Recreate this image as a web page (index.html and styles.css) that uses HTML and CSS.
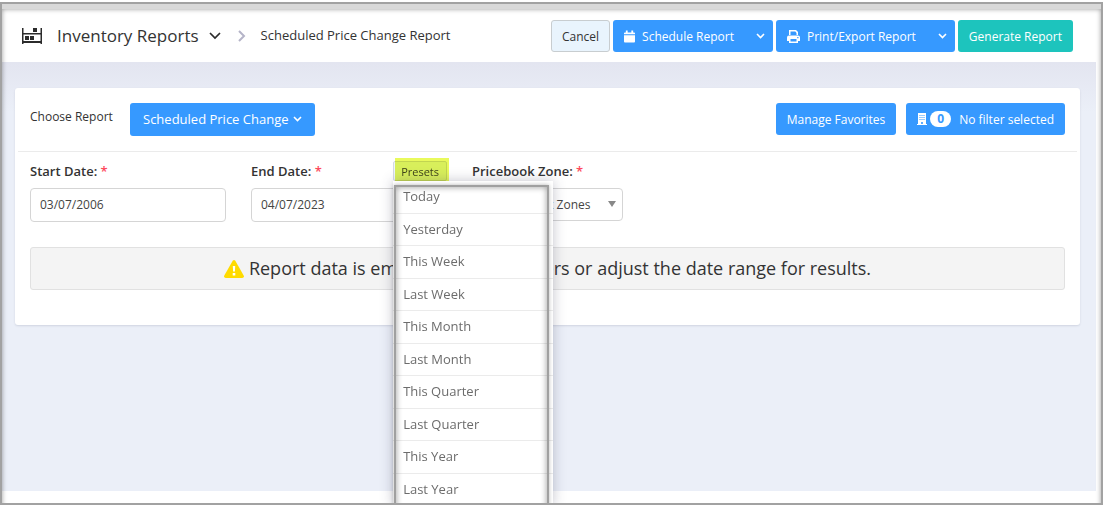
FILE: index.html
```
<!DOCTYPE html>
<html lang="en">
<head>
<meta charset="UTF-8">
<meta name="viewport" content="width=device-width, initial-scale=1.0">
<title>Inventory Reports</title>
<link rel="stylesheet" href="styles.css">
</head>
<body>
<div class="frame">

    <header class="topbar">
        <svg class="shelf" viewBox="0 0 20 16" width="20" height="16" fill="#2b2b2b">
            <path d="M0 0h1.500v5h17V0H20v16h-1.500v-1h-17v1H0zM1.500 6.500v6.500h17V6.500z" fill-rule="evenodd"/>
            <path d="M11 0h4v4h-4zM3 8h4v4H3zM8 8h4v4H8z"/>
        </svg>
        <h1 class="title">Inventory Reports</h1>
        <button class="icon-btn" type="button" aria-label="Open report menu">
            <svg viewBox="0 0 12 8" width="12" height="8" fill="none" stroke="#2b2b2b" stroke-width="1.7"><path d="M1 1l5 5 5-5"/></svg>
        </button>
        <svg class="crumb-arrow" viewBox="0 0 8 12" width="8" height="12" fill="none" stroke="#b5b4c8" stroke-width="2"><path d="M1 1l5 5-5 5"/></svg>
        <span class="crumb">Scheduled Price Change Report</span>

        <div class="actions">
            <button class="btn cancel" type="button">Cancel</button>
            <div class="split">
                <button class="btn" type="button">
                    <svg viewBox="0 0 12 13" width="11" height="13" fill="#fff"><path d="M2 0h2v2h4V0h2v2h1q1 0 1 1v1H0V3q0-1 1-1h1zM0 5h12v7q0 1-1 1H1q-1 0-1-1z"/></svg>
                    Schedule Report
                </button>
                <button class="btn caret" type="button" aria-label="Schedule options">
                    <svg viewBox="0 0 9 6" width="9" height="6" fill="none" stroke="#fff" stroke-width="1.6"><path d="M1 1l3.500 3.500L8 1"/></svg>
                </button>
            </div>
            <div class="split">
                <button class="btn" type="button">
                    <svg viewBox="0 0 13 13" width="13" height="13" fill="#fff"><path fill-rule="evenodd" d="M2 0h7l2 2v3H9.500V3L8.300 1.600H3.500V5H2zM2 5.500h9q2 0 2 2V11h-2v2H2v-2H0V7.500q0-2 2-2zM3.500 9v2.500h6V9zM10.200 7v1.200h1.300V7z"/></svg>
                    Print/Export Report
                </button>
                <button class="btn caret" type="button" aria-label="Export options">
                    <svg viewBox="0 0 9 6" width="9" height="6" fill="none" stroke="#fff" stroke-width="1.6"><path d="M1 1l3.500 3.500L8 1"/></svg>
                </button>
            </div>
            <button class="btn generate" type="button">Generate Report</button>
        </div>
    </header>

    <main class="content">
        <section class="card">
            <div class="report-row">
                <span class="choose">Choose Report</span>
                <button class="btn report-select" type="button">
                    Scheduled Price Change
                    <svg viewBox="0 0 9 6" width="9" height="6" fill="none" stroke="#fff" stroke-width="1.6"><path d="M1 1l3.500 3.500L8 1"/></svg>
                </button>
                <div class="filters">
                    <button class="btn" type="button">Manage Favorites</button>
                    <button class="btn filter-btn" type="button">
                        <svg viewBox="0 0 10 12" width="10" height="12" fill="#fff"><path fill-rule="evenodd" d="M1 0h8v11h1v1H0v-1h1zM2.500 2v1h1V2zM4.500 2v1h1V2zM6.500 2v1h1V2zM2.500 4v1h1V4zM4.500 4v1h1V4zM6.500 4v1h1V4zM2.500 6v1h1V6zM4.500 6v1h1V6zM6.500 6v1h1V6zM4.200 9v2h1.600V9z"/></svg>
                        <span class="count">0</span>
                        <span>No filter selected</span>
                    </button>
                </div>
            </div>

            <form class="fields">
                <div class="field">
                    <label for="start">Start Date: <span class="req">*</span></label>
                    <input type="text" id="start" value="03/07/2006">
                </div>
                <div class="field">
                    <div class="label-row">
                        <label for="end">End Date: <span class="req">*</span></label>
                        <div class="presets">
                            <button class="presets-btn" type="button">Presets</button>
                            <ul class="menu">
                                <li><a href="#">Today</a></li>
                                <li><a href="#">Yesterday</a></li>
                                <li><a href="#">This Week</a></li>
                                <li><a href="#">Last Week</a></li>
                                <li><a href="#">This Month</a></li>
                                <li><a href="#">Last Month</a></li>
                                <li><a href="#">This Quarter</a></li>
                                <li><a href="#">Last Quarter</a></li>
                                <li><a href="#">This Year</a></li>
                                <li><a href="#">Last Year</a></li>
                            </ul>
                        </div>
                    </div>
                    <input type="text" id="end" value="04/07/2023">
                </div>
                <div class="field zone">
                    <label for="zone">Pricebook Zone: <span class="req">*</span></label>
                    <select id="zone">
                        <option>All Pricebook Zones</option>
                    </select>
                </div>
            </form>

            <div class="alert">
                <svg viewBox="0 0 20 18" width="20" height="18"><path d="M8.700.8q1.300-1.600 2.600 0l8.400 14.700q.8 2.300-1.500 2.500H1.800Q-.5 17.800.3 15.500z" fill="#ffdb00"/><path d="M8.800 6h2.400l-.3 5.500H9.100zM8.700 13h2.600v2.500H8.700z" fill="#fff"/></svg>
                Report data is empty. Select any filters or adjust the date range for results.
            </div>
        </section>
    </main>

</div>
</body>
</html>
```
FILE: styles.css
```
* {
    box-sizing: border-box;
}

body {
    margin: 0;
    padding-top: 2px;
    background: #fff;
    color: #333;
    font-family: "Open Sans", Arial, sans-serif;
    font-size: 13px;
    line-height: 1.5;
}

button, input, select {
    font-family: inherit;
    font-size: 12px;
}

/* window frame */
.frame {
    position: relative;
    display: flex;
    flex-direction: column;
    height: calc(100vh - 2px);
    padding: 0 5px 12px 0;
    border: 2px solid #a2a2a2;
    overflow: hidden;
}

.frame::after {
    content: "";
    position: absolute;
    inset: 0 0 -10px;
    border-top: 5px solid #d9d9d9;
    box-shadow: inset 0 0 5px rgba(0, 0, 0, 0.4);
    pointer-events: none;
}

/* header */
.topbar {
    display: flex;
    align-items: center;
    padding: 16px 23px 10px 20px;
    background: #fff;
}

.title {
    margin: 0 10px 0 15px;
    font-size: 17px;
    font-weight: 400;
    line-height: 24px;
}

.icon-btn {
    display: flex;
    padding: 0;
    border: 0;
    background: none;
    cursor: pointer;
}

.crumb-arrow {
    margin: 0 15px 0 17px;
}

.actions {
    display: flex;
    gap: 3px;
    margin-left: auto;
}

.btn {
    display: flex;
    align-items: center;
    gap: 7px;
    height: 32px;
    padding: 0 11px;
    border: 0;
    border-radius: 3px;
    background: #3699ff;
    color: #fff;
    white-space: nowrap;
    cursor: pointer;
}

.cancel {
    padding: 0 10px;
    border: 1px solid #c8cdd0;
    background: #e9f4fd;
    color: #333;
}

.generate {
    background: #1dc4bd;
}

.split {
    display: flex;
    border-radius: 3px;
    background: #3699ff;
}

.split .btn {
    background: none;
}

.split .caret {
    padding: 0 8px 0 11px;
}

/* page */
.content {
    flex: 1;
    padding: 26px 16px 0 13px;
    background: linear-gradient(#e3e5f0, #ebeff8 50px);
}

.card {
    padding-bottom: 35px;
    border-radius: 3px;
    background: #fff;
    box-shadow: 0 1px 2px rgba(60, 70, 100, 0.15);
}

.report-row {
    display: flex;
    align-items: flex-start;
    margin: 0 3px;
    padding: 15px 12px;
    border-bottom: 1px solid #ebebeb;
}

.choose {
    width: 100px;
    padding-top: 5px;
    font-size: 12px;
}

.report-select {
    height: 33px;
    padding: 0 13px 1px;
    font-size: 13px;
    gap: 4px;
}

.filters {
    display: flex;
    gap: 10px;
    margin-left: auto;
}

.filter-btn {
    gap: 3px;
}

.count {
    margin-right: 5px;
    padding: 0 7px;
    border-radius: 8px;
    background: #fff;
    color: #3699ff;
    font-weight: 700;
    line-height: 16px;
}

.fields {
    display: flex;
    gap: 25px;
    padding: 9px 15px 0;
}

.field {
    display: flex;
    flex-direction: column;
    gap: 7px;
    width: 196px;
}

.field label {
    font-weight: 600;
    line-height: 20px;
}

.field.zone {
    width: 151px;
}

.req {
    color: #fd4a5c;
}

.field input {
    width: 100%;
    height: 34px;
    padding: 0 9px 1px;
    border: 1px solid #d5d5d5;
    border-radius: 4px;
    color: #444;
}

.field select {
    appearance: none;
    height: 33px;
    padding: 0 9px 0 8px;
    border: 1px solid #d5d5d5;
    border-radius: 4px;
    background: #fff;
    color: #444;
}

.zone {
    position: relative;
}

.zone::after {
    content: "";
    position: absolute;
    right: 7px;
    top: 40px;
    border: 4px solid transparent;
    border-top: 6px solid #888;
    border-bottom: 0;
}

.label-row {
    display: flex;
    justify-content: space-between;
}

.presets {
    position: relative;
    z-index: 1;
}

.presets-btn {
    display: block;
    height: 20px;
    padding: 0 7px;
    border: 1px solid #d5dae0;
    border-radius: 2px;
    background: #edf4fc;
    color: #444;
    font-size: 11px;
}

/* marker over the presets button */
.presets::before {
    content: "";
    position: absolute;
    inset: -3px -2px -1px 2px;
    background: #e9fa5c;
    mix-blend-mode: multiply;
}

.menu {
    position: absolute;
    top: 100%;
    left: 0;
    width: 160px;
    margin: 0;
    padding: 0;
    list-style: none;
    background: #fff;
    box-shadow: 0 0 12px rgba(60, 60, 90, 0.3);
}

.menu::after {
    content: "";
    position: absolute;
    inset: 4px 4px -20px 1px;
    border: 2px solid #a0a0a0;
    box-shadow: 0 0 4px rgba(0, 0, 0, 0.3), inset 0 0 6px rgba(0, 0, 0, 0.4);
    pointer-events: none;
}

.menu li {
    border-bottom: 1px solid #ebebeb;
}

.menu a {
    display: block;
    padding: 6px 10px;
    color: #6c6c6c;
    text-decoration: none;
}

.alert {
    display: flex;
    align-items: center;
    justify-content: center;
    gap: 5px;
    margin: 25px 15px 0;
    padding: 8px;
    border: 1px solid #e1e1e1;
    border-radius: 3px;
    background: #f4f4f4;
    font-size: 18px;
    line-height: 25px;
}
```
